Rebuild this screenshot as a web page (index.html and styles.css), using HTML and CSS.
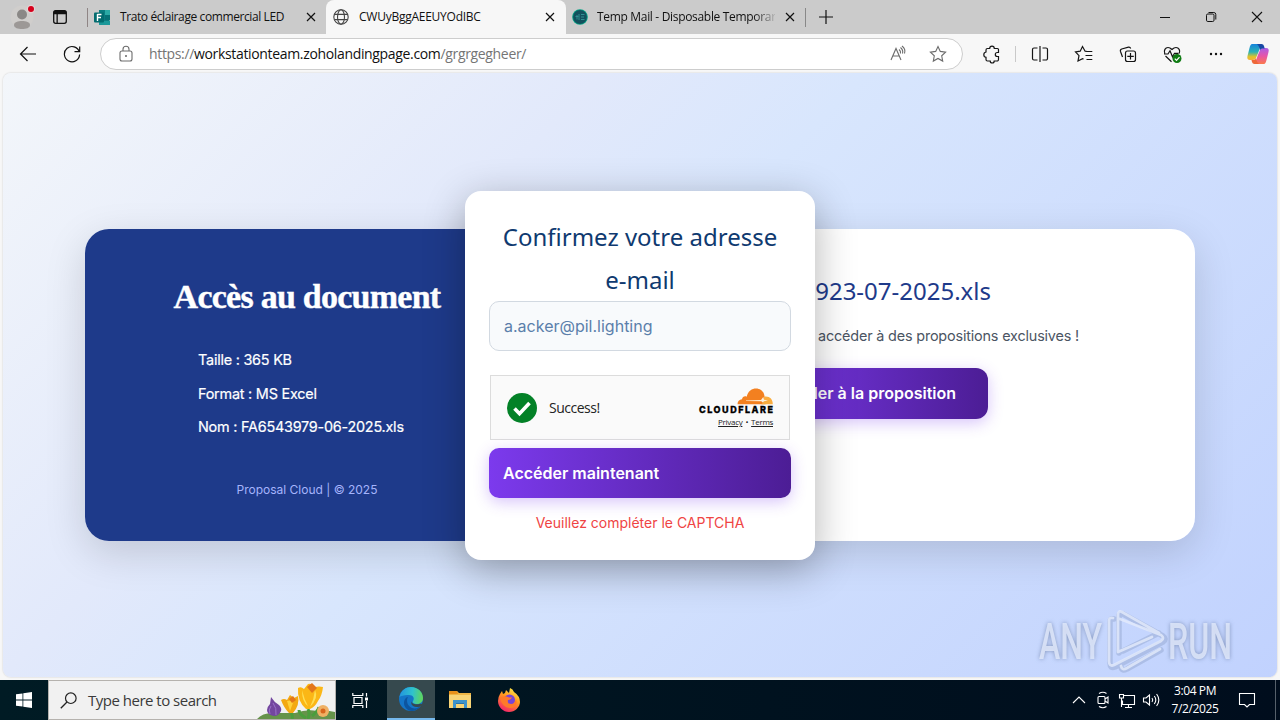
FILE: index.html
```html
<!DOCTYPE html>
<html lang="fr">
<head>
<meta charset="utf-8">
<title>CWUyBggAEEUYOdIBC</title>
<link rel="stylesheet" href="styles.css">
</head>
<body>
<div class="screen">
  <header class="tabstrip">
    <div class="profile">
      <svg width="26" height="30" viewBox="0 0 26 30"><circle cx="12" cy="15" r="11.500" fill="#d0cecc"/><circle cx="12" cy="12.500" r="5" fill="#8b8886"/><path d="M4 23c0-3 4-4 8-4s8 1 8 4-4 4-8 4-8-1-8-4z" fill="#9c9896"/><circle cx="21" cy="7" r="4.200" fill="#e3d3d3"/><circle cx="21" cy="7" r="3" fill="#d6001c"/></svg>
    </div>
    <div class="workspaces">
      <svg width="16" height="16" viewBox="0 0 16 16"><rect x="1.700" y="1.700" width="12.600" height="12.600" rx="2" fill="none" stroke="#111" stroke-width="1.300"/><path d="M1.500 3.500a2 2 0 0 1 2-2h9a2 2 0 0 1 2 2v1.800h-13zM4.500 5h1.300v9H4.500z" fill="#111"/></svg>
    </div>
    <div class="tab tab-first">
      <svg class="fav" width="17" height="17" viewBox="0 0 17 17"><path d="M5 1h10.500v15H5z" fill="#0b7c80"/><path d="M11 1h5v5h-5z" fill="#2aa9a5"/><path d="M11 6h5v5h-5z" fill="#067176"/><path d="M5 12h11v4H5z" fill="#1b9899"/><rect x="0" y="3.500" width="10" height="10" rx="1" fill="#036c70"/><path d="M3.500 5.500h4M3.500 5v7M3.500 8.500H7" stroke="#fff" stroke-width="1.400"/></svg>
      <span class="tab-title t1">Trato éclairage commercial LED</span>
      <svg class="x" width="10" height="10" viewBox="0 0 10 10"><path d="M1 1l8 8M9 1l-8 8"/></svg>
    </div>
    <div class="tab tab-active">
      <svg class="fav" width="16" height="16" viewBox="0 0 16 16" fill="none" stroke="#444" stroke-width="1.100"><circle cx="8" cy="8" r="7.200"/><ellipse cx="8" cy="8" rx="3.500" ry="7.200"/><path d="M1.500 5.400h13M1.500 10.600h13"/></svg>
      <span class="tab-title t2">CWUyBggAEEUYOdIBC</span>
      <svg class="x" width="10" height="10" viewBox="0 0 10 10"><path d="M1 1l8 8M9 1l-8 8"/></svg>
    </div>
    <div class="tab tab-last">
      <svg class="fav" width="16" height="16" viewBox="0 0 16 16"><circle cx="8" cy="8" r="7.800" fill="#00a284"/><circle cx="8" cy="8" r="6.900" fill="#12515d"/><path d="M3.500 7.500h3M5 6v4.500M7 5v6M9 5.500h3.500M9 8h3M9 10.500h3.500" stroke="#2e8f90" stroke-width="1" fill="none"/></svg>
      <span class="tab-title t3">Temp Mail - Disposable Temporar</span>
      <svg class="x" width="10" height="10" viewBox="0 0 10 10"><path d="M1 1l8 8M9 1l-8 8"/></svg>
    </div>
    <svg class="plus" width="14" height="14" viewBox="0 0 14 14"><path d="M7 0v14M0 7h14" stroke="#111" stroke-width="1.200"/></svg>
    <div class="winctl">
      <svg width="46" height="34" viewBox="0 0 46 34"><path d="M18 17.500h10" stroke="#111"/></svg>
      <svg width="46" height="34" viewBox="0 0 46 34" fill="none" stroke="#111"><rect x="18.500" y="14" width="7.500" height="7.500" rx="1.300"/><path d="M20.500 12.500h5.300a2 2 0 0 1 2 2v5"/></svg>
      <svg width="46" height="34" viewBox="0 0 46 34"><path d="M18 12l10 10M28 12l-10 10" stroke="#111" stroke-width="1.100"/></svg>
    </div>
  </header>

  <nav class="toolbar">
    <svg class="nav-ic" width="18" height="18" viewBox="0 0 18 18"><path d="M17 9H1.500M8.500 2L1.500 9l7 7"/></svg>
    <svg class="nav-ic reload" width="18" height="18" viewBox="0 0 18 18"><path d="M16.300 7A7.600 7.600 0 1 0 16.600 9.500M16.700 1.500v5.200h-5.200"/></svg>
    <div class="address">
      <svg class="lock" width="14" height="18" viewBox="0 0 14 18"><rect x="1" y="6" width="12" height="10" rx="2" /><path d="M4 6V4.200a3 3 0 0 1 6 0V6"/><circle cx="7" cy="11" r=".5"/></svg>
      <span class="url">https://<b>workstationteam.zoholandingpage.com</b>/grgrgegheer/</span>
      <svg class="read" width="18" height="18" viewBox="0 0 18 18"><path d="M2 15L7 3.500 12 15M4 11h6.200M10 4.500q2 1.500 1.500 4M11.500 2.500q3 2.500 2 6M13 1q4 3 2.500 7.500"/></svg>
      <svg class="star" width="18" height="18" viewBox="0 0 18 18"><path d="M9 1.500l2.300 4.900 5.300.7-3.900 3.700 1 5.300L9 13.500l-4.700 2.600 1-5.300L1.400 7.100l5.300-.7z"/></svg>
    </div>
    <div class="actions">
      <svg width="44" height="40" viewBox="0 0 44 40"><path d="M17.500 14.500h2.200a2.300 2.300 0 0 1 4.600 0h3.200a1 1 0 0 1 1 1v3h-1.200a2 2 0 0 0 0 4h1.200v3a1.500 1.500 0 0 1-1.500 1.500h-2.800a2 2 0 0 1-4 0h-2.700a1.500 1.500 0 0 1-1.500-1.500v-2.200a2.700 2.700 0 0 1 0-5.300v-2a1.500 1.500 0 0 1 1.500-1.500z"/></svg>
      <i class="sep"></i>
      <svg width="44" height="40" viewBox="0 0 44 40"><path d="M19.500 14h-3.500a1.500 1.500 0 0 0-1.500 1.500v9a1.500 1.500 0 0 0 1.500 1.500h3.500M24.500 14h3.500a1.500 1.500 0 0 1 1.500 1.500v9a1.500 1.500 0 0 1-1.500 1.500h-3.500M22 12v16"/></svg>
      <svg width="44" height="40" viewBox="0 0 44 40"><path d="M25 17.500l-1.900-.3L20.500 12.500l-2.300 4.700-4.700.8 3.500 3.700-1 5.300 4.500-2.400 1 .5M24 17.500h6.300M23.500 21.500h6.800M24.500 25.500h5.800"/></svg>
      <svg width="44" height="40" viewBox="0 0 44 40"><rect x="19.500" y="17" width="10" height="10.500" rx="2"/><path d="M24.500 19v6.500M21.300 22.300h6.500M16.500 23l-2-5.500a2 2 0 0 1 1.200-2.500l6.800-1.800a2 2 0 0 1 2.200 1.200"/></svg>
      <svg width="44" height="40" viewBox="0 0 44 40"><path d="M14.800 19.500c-1.300-3 .5-6 3.200-6 2 0 3 1 4 2 1-1 2-2 4-2 2.800 0 4.600 3 3.200 6M15.500 22l6 5.800M14 20h4l2-3.200 2.500 6 2-3.500h4"/><circle cx="27" cy="24.500" r="4.500" fill="#0f7b13" stroke="none"/><path d="M24.800 24.600l1.700 1.700 3-3.200" stroke="#fff"/></svg>
      <svg width="44" height="40" viewBox="0 0 44 40"><g fill="#111" stroke="none"><circle cx="17" cy="20" r="1.200"/><circle cx="22" cy="20" r="1.200"/><circle cx="27" cy="20" r="1.200"/></g></svg>
      <svg width="40" height="40" viewBox="0 0 40 40"><defs><linearGradient id="c1" x1="0" y1="0" x2="0" y2="1"><stop offset="0" stop-color="#1683dc"/><stop offset=".5" stop-color="#2bb3b5"/><stop offset=".8" stop-color="#e3c328"/><stop offset="1" stop-color="#f5b03c"/></linearGradient><linearGradient id="c2" x1="0" y1="0" x2="0" y2="1"><stop offset="0" stop-color="#a95fe8"/><stop offset=".5" stop-color="#e756a7"/><stop offset="1" stop-color="#fb794b"/></linearGradient></defs><g stroke="none"><path d="M14 10h9l-2.500 8-2.500 6q-1 2-3 2h-3q-3.500 0-2.500-4l2-8q1-4 2.500-4z" fill="url(#c1)"/><path d="M26 30h-9l2.500-8 2.500-6q1-2 3-2h3q3.500 0 2.500 4l-2 8q-1 4-2.500 4z" fill="url(#c2)"/><path d="M19 10h4.500q2 0 2.500 2l.7 2.500h-2.200q-2 0-2.500 2l-.7-3q-.5-2-2.300-3.500z" fill="#1749a5"/><path d="M21 30h-4.500q-2 0-2.500-2l-.5-2h2q2 0 2.500-2l.7 2.500q.5 2 2.300 3.500z" fill="#ee683a"/></g></svg>
    </div>
  </nav>

  <main class="page">
    <section class="card">
      <div class="panel-left">
        <h1>Accès au document</h1>
        <ul>
          <li>Taille : 365 KB</li>
          <li>Format : MS Excel</li>
          <li>Nom : FA6543979-06-2025.xls</li>
        </ul>
        <p class="foot">Proposal Cloud | © 2025</p>
      </div>
      <div class="panel-right">
        <h2>923-07-2025.xls</h2>
        <p>accéder à des propositions exclusives !</p>
        <div class="cta">Accéder à la proposition</div>
      </div>
    </section>

    <section class="modal">
      <h3>Confirmez votre adresse<br>e-mail</h3>
      <div class="input">a.acker@pil.lighting</div>
      <div class="captcha">
        <svg class="ok" width="30" height="30" viewBox="0 0 30 30"><circle cx="15" cy="15" r="15" fill="#038127"/><path d="M7.500 15.500l5 5.200L22.500 10" fill="none" stroke="#fff" stroke-width="3.600"/></svg>
        <span class="success">Success!</span>
        <div class="cf">
          <svg width="76" height="28" viewBox="0 0 76 28"><path d="M38.500 17.200c0-3 1.800-4.700 4.500-5 .3-2.600 3-3.700 4.700-2.500C49 4 53 1.500 57 1.500c4.500 0 7.800 3 8.500 7.500l1 8.200z" fill="#f38020"/><path d="M62 17.200c2.500-1 1.800-3 3.500-7.500 5-.7 8.300 2.500 8.300 7.500z" fill="#faad3f"/><path d="M47 13.400l15-.4 2.300-3 .7 2.700 4 .8-4 .8-1.200 1.300-1.500-1.300-15.300-.2z" fill="#fff3df"/><text x="0" y="26.300" textLength="74" lengthAdjust="spacing" class="cf-word">CLOUDFLARE</text></svg>
          <div class="links"><u>Privacy</u><em>•</em><u>Terms</u></div>
        </div>
      </div>
      <div class="submit">Accéder maintenant</div>
      <p class="error">Veuillez compléter le CAPTCHA</p>
    </section>

    <svg class="watermark" width="210" height="80" viewBox="0 0 210 80">
      <g class="wm-text"><text x="4" y="52" textLength="63" lengthAdjust="spacingAndGlyphs">ANY</text><text x="133" y="52" textLength="64" lengthAdjust="spacingAndGlyphs">RUN</text></g>
      <g fill="none" stroke-linecap="round" stroke-linejoin="round">
        <path d="M79 12q-4-1-4 3v41q0 6 5 4l48-25q4-3 0-6L88 7q-4-2-4 3v36M86 60q1 5 6 2l34-19M88 44l36-18" stroke="#8296bd" stroke-opacity=".35" stroke-width="5.500"/>
        <path d="M78 11q-4-1-4 3v40q0 6 5 4l47-24q4-3 0-6L85 12M124 26L87 5q-4-2-4 3v37l34-15M86 59q1 5 6 2l33-19" stroke="#e3ebfb" stroke-opacity=".8" stroke-width="2.800"/>
      </g>
    </svg>
  </main>

  <footer class="taskbar">
    <div class="start"><svg width="16" height="16" viewBox="0 0 16 16" fill="#fff"><path d="M0 2.300L6.500 1.400v6.200H0zM7.300 1.300L16 0v7.600H7.300zM0 8.400h6.500v6.200L0 13.700zM7.300 8.400H16V16l-8.700-1.300z"/></svg></div>
    <div class="search">
      <svg width="17" height="17" viewBox="0 0 17 17"><circle cx="10.800" cy="6.200" r="5.300" fill="none" stroke="#222" stroke-width="1.200"/><path d="M7 10L.8 16.200" stroke="#222" stroke-width="1.300"/></svg>
      <span>Type here to search</span>
      <svg class="flowers" width="78" height="38" viewBox="0 0 78 38"><path d="M0 38q6-7 18-6l20 0q12-4 22-2 10-1 18 1v7z" fill="#66934a"/><path d="M51 38Q53 32 51 28M35 38q1-3-1-6M49 37Q42 33 42 29M55 35q6-5 7-9" stroke="#4a9e3c" stroke-width="3" fill="none"/><path d="M14 16q3 5 8 8 3 3 2 6-2 5-7 5-7-1-7-6 0-3 3-6z" fill="#73469f"/><path d="M16 22q4 5 3 12M14 25q-3 4-1 8" stroke="#9a72c8" stroke-width="1" fill="none"/><path d="M24 19q3-2 6 0l3-5 4 3 4-2q2 9-5 17h-4q-5-5-8-13z" fill="#f3a912"/><path d="M30 20l3 10 4-11" fill="#ffd13a"/><path d="M41 7q3-2 6 1l4-5q4-1 7 3 4-1 8 0-1 9-5 14-3 6-8 8h-4q-9-8-8-21z" fill="#fbb716"/><path d="M45 9q2 9 6 16-6-4-6-16zM58 9q4 8-5 17 4-8 5-17z" fill="#ffdf55"/><path d="M50 6l5-4 5 5-5 5z" fill="#e3761a"/><path d="M32 18l4-3 3 4-4 3z" fill="#e3761a"/><circle cx="66" cy="30" r="6" fill="#efb064"/><circle cx="66" cy="30" r="2.500" fill="#d8661c"/></svg>
    </div>
    <div class="task tv"><svg width="17" height="17" viewBox="0 0 17 17" fill="none" stroke="#fff" stroke-width="1.200"><path d="M.8 1v2.500h10V1M.8 16v-2.500h10V16M2 5.500h8v6H2zM14.500 1v3.500M14.500 9v7"/><path d="M13 5.500h3v3h-3z" fill="#fff" stroke="none"/></svg></div>
    <div class="task edge"><svg width="24" height="24" viewBox="0 0 24 24"><defs><linearGradient id="e1" x1="0" y1=".3" x2="1" y2=".4"><stop offset="0" stop-color="#2294df"/><stop offset=".55" stop-color="#2fc2cd"/><stop offset="1" stop-color="#5fd65c"/></linearGradient></defs><circle cx="12" cy="12" r="12" fill="#1475c7"/><path d="M.5 10C2 3 7 0 12 0c7 0 12 5 12 11 0 4-3 6-6 6-3 0-5-1-4-3 2-3 0-6-4-6-4-.4-8 1-9.500 2z" fill="url(#e1)"/><path d="M9 10c-2 3-1 9 4 11 4 1.500 8-1 9-3-2 4-6 6-10 6-5-1-7-5-7-8 0-3 2-6 4-6z" fill="#0d559f"/><path d="M13 14c-1 3 4 4 8 2.700l3 .3v7l-1.500-5c-3 2-7 1-9-.5-1.500-1.500-1.500-3-.5-4.500z" fill="#36494e"/></svg></div>
    <div class="task"><svg width="22" height="20" viewBox="0 0 22 20"><path d="M0 1h8l2 2h12v15H0z" fill="#eeb545"/><path d="M0 5h22v13H0z" fill="#f8d476"/><path d="M0 1h8l1 3H0z" fill="#e8911a"/><path d="M4 10h14v8h-3v-4H7v4H4z" fill="#3d93cc"/><path d="M7 13h8v1H7z" fill="#2874aa"/></svg></div>
    <div class="task"><svg width="24" height="24" viewBox="0 0 24 24"><defs><linearGradient id="f1" x1=".8" y1="0" x2=".3" y2="1"><stop offset="0" stop-color="#fff04a"/><stop offset=".45" stop-color="#ff971f"/><stop offset="1" stop-color="#f5226c"/></linearGradient></defs><path d="M3 6l2-3 1 3 2-1 1-3q2 2 3 3l1-5q3 1 4 4 6 4 6 10c0 5-5 10-11 10S1 19 1 13q0-4 2-7z" fill="url(#f1)"/><circle cx="12.500" cy="12" r="5.500" fill="#7645d8"/><path d="M3 10q4-3 8-1 2 1 4 0-1 3-4 3-1 4 3 4 4 0 5-5 2 8-5 9-9 0-11-10z" fill="#ff7a29"/></svg></div>
    <div class="tray">
      <svg width="24" height="20" viewBox="0 0 24 20"><path d="M6 13l6-6 6 6"/></svg>
      <svg width="24" height="20" viewBox="0 0 24 20"><rect x="7" y="6.500" width="7" height="7" rx="1"/><path d="M14 9l3-2v6l-3-2M8 3.500q4-2.500 7.500 0M8 16.500q4 2.500 7.500 0"/></svg>
      <svg width="24" height="20" viewBox="0 0 24 20"><path d="M8.500 5.500h11v9h-12v-4M13.500 14.500v3M10 17.500h7M4.500 4.500h4v3.500h-4zM6.500 8v9"/></svg>
      <svg width="24" height="20" viewBox="0 0 24 20"><path d="M4.500 8h2.500l3.500-3v10l-3.500-3H4.500zM13 8q1.500 2 0 4M15.300 6q3 4 0 8M17.600 4q4.500 6 0 12"/></svg>
      <div class="clock"><span>3:04 PM</span><span>7/2/2025</span></div>
      <svg class="note" width="18" height="18" viewBox="0 0 18 18"><path d="M1.500 2.500h15v11h-5L9 16l-2.500-2.500h-5z"/></svg>
      <i class="peek"></i>
    </div>
  </footer>
</div>
</body>
</html>
```
FILE: styles.css
```css
* { box-sizing: border-box; }
body { margin: 0; font-family: "Open Sans", "Noto Sans", sans-serif; }
h1, h2, h3, p, ul { margin: 0; padding: 0; font-weight: 400; }
svg { display: block; flex: none; }
.screen { width: 1280px; height: 720px; display: flex; flex-direction: column; overflow: hidden; background: #f7f7f7; white-space: nowrap; }

/* Tab strip */
.tabstrip { height: 34px; flex: none; background: #cbcbcb; display: flex; align-items: center; }
.profile { width: 42px; padding-left: 10px; }
.workspaces { width: 46px; padding-left: 10px; }
.tab { height: 34px; display: flex; align-items: center; font-size: 12px; color: #111; }
.tab-first { width: 238px; padding-left: 6px; position: relative; }
.tab-first::before { content: ""; position: absolute; left: -1px; top: 8px; width: 1px; height: 19px; background: #8f8585; }
.tab-active { width: 240px; background: #f7f7f7; border-radius: 8px 8px 0 0; padding-left: 7px; }
.tab-last { width: 240px; padding-left: 6px; position: relative; }
.tab-last::after { content: ""; position: absolute; left: 239px; top: 8px; width: 1px; height: 19px; background: #888; }
.fav { margin-right: 9px; }
.tab-active .fav { margin-right: 10px; }
.tab-title { flex: none; line-height: 20px; }
.t1 { width: 186px; letter-spacing: -.4px; }
.t2 { width: 186px; letter-spacing: -.25px; }
.t3 { width: 178px; margin-right: 10px; letter-spacing: -.32px; -webkit-mask-image: linear-gradient(90deg, #000 88%, transparent 102%); mask-image: linear-gradient(90deg, #000 88%, transparent 102%); }
.x { stroke: #111; stroke-width: 1.2; }
.plus { margin-left: 13px; }
.winctl { display: flex; margin-left: auto; }

/* Toolbar */
.toolbar { height: 39px; flex: none; display: flex; align-items: center; padding-left: 19px; }
.nav-ic { fill: none; stroke: #111; stroke-width: 1.2; }
.reload { margin-left: 26px; }
.address { width: 863px; height: 32px; margin-left: 19px; border: 1px solid #cdcdcd; border-radius: 16px; background: #fff; display: flex; align-items: center; padding: 0 15px 0 18px; }
.address svg { fill: none; stroke: #6c6c6c; stroke-width: 1.1; }
.url { margin-left: 16px; flex: 1; font-size: 14px; letter-spacing: -.34px; color: #757575; }
.url b { font-weight: 400; color: #111; }
.read { margin-right: 22px; }
.actions { display: flex; align-items: center; margin-left: 7px; }
.actions svg { fill: none; stroke: #151515; stroke-width: 1.2; }
.sep { width: 1px; height: 16px; background: #c9c9c9; margin: 0 2px 0 1px; }

/* Web page */
.page { height: 604px; margin: 0 3px 3px; flex: none; border-radius: 8px; position: relative; overflow: hidden; display: flex; align-items: center; justify-content: center; padding-top: 20px; background: linear-gradient(135deg, #f3f6fa 0%, #e2e9fb 32%, #d8e6fd 46%, #c1d2fe 100%); font-family: Inter, sans-serif; box-shadow: 0 0 2px rgba(0, 0, 0, .2); }
.card { width: 1110px; height: 312px; display: flex; border-radius: 24px; overflow: hidden; box-shadow: 0 12px 40px rgba(0, 0, 0, .15); }
.panel-left { width: 444px; background: #1e3a8a; color: #fff; padding-top: 48px; }
.panel-left h1 { font: 700 34px/40px "Liberation Serif", serif; letter-spacing: -.75px; -webkit-text-stroke: .4px #fff; text-align: center; }
.panel-left ul { list-style: none; padding: 26px 0 0 113px; }
.panel-left li { height: 33.5px; line-height: 33.5px; font-size: 14.4px; letter-spacing: -.22px; -webkit-text-stroke: .2px #fff; }
.foot { font-size: 12px; line-height: 20px; margin-top: 36px; text-align: center; color: #a5b4fc; }
.panel-right { flex: 1; background: #fff; display: flex; flex-direction: column; align-items: flex-end; padding-top: 40px; }
.panel-right h2 { font: 400 24px/44px "Noto Sans", sans-serif; color: #1e3a8a; margin-right: 204px; }
.panel-right p { font-size: 14.4px; letter-spacing: -.17px; line-height: 24px; margin: 11px 116px 0 0; color: #4b5563; }
.cta { width: 252px; height: 51px; margin: 20px 207px 0 0; padding-right: 32px; border-radius: 12px; text-align: right; font-weight: 600; font-size: 16px; line-height: 51px; color: #fff; background: linear-gradient(90deg, #7c3aed, #4c1d95); box-shadow: 0 4px 15px rgba(124, 58, 237, .3); }

/* Dialog lies over the card */
.modal { position: absolute; left: 462px; top: 118px; width: 350px; height: 369px; background: #fff; border-radius: 16px; padding: 24px; box-shadow: 0 10px 40px rgba(0, 0, 0, .3); }
.modal h3 { font: 400 24px/43px "Noto Sans", sans-serif; color: #0f3a70; text-align: center; }
.input { height: 50px; border: 1px solid #d2d9e1; border-radius: 10px; background: #f8fafc; padding-left: 14px; font-size: 16px; line-height: 49px; color: #5b7fab; }
.captcha { width: 300px; height: 65px; margin: 24px 0 8px 1px; border: 1px solid #dcdcdc; background: #fafafa; display: flex; align-items: center; padding: 0 16px; font-family: "Open Sans", sans-serif; }
.success { margin-left: 12px; font-size: 14px; letter-spacing: -.5px; color: #232323; }
.cf { margin-left: auto; width: 74px; }
.cf svg { overflow: visible; }
.cf-word { font: 800 9px Inter, sans-serif; stroke: #000; stroke-width: .3px; }
.links { display: flex; justify-content: flex-end; gap: 3px; font-size: 8px; line-height: 12px; letter-spacing: -.3px; margin-top: 1px; color: #232323; }
.links em { font-style: normal; }
.submit { height: 50px; border-radius: 10px; padding-left: 14px; font-weight: 600; font-size: 16px; line-height: 51px; color: #fff; background: linear-gradient(90deg, #7c3aed, #4c1d95); box-shadow: 0 4px 15px rgba(124, 58, 237, .3); }
.error { font-size: 14px; line-height: 24px; margin-top: 13px; text-align: center; color: #ef4444; }

.watermark { position: absolute; left: 1032px; top: 534px; }
.wm-text { font: 500 50px Roboto, sans-serif; fill: #dfe8fa; fill-opacity: .85; filter: drop-shadow(0 0 2px rgba(90, 110, 150, .7)); }

/* Taskbar */
.taskbar { height: 40px; flex: none; display: flex; background: linear-gradient(90deg, #001b24, #00121f 60%, #000d1d); color: #fff; }
.start { width: 48px; display: flex; align-items: center; justify-content: center; }
.search { width: 288px; background: #f1f1f1; border: 1px solid #b5b2ae; display: flex; align-items: center; padding-left: 11px; position: relative; }
.search span { margin-left: 11px; color: #3a3a3a; font-size: 15px; letter-spacing: -.5px; }
.flowers { position: absolute; right: 0; bottom: 0; }
.task { width: 49px; display: flex; align-items: center; justify-content: center; }
.tv { width: 51px; padding-right: 2px; }
.edge { width: 48px; background: #36494e; border-bottom: 2px solid #76b9ed; }
.tray { margin-left: auto; display: flex; align-items: center; }
.tray svg { fill: none; stroke: #fff; stroke-width: 1.1; }
.clock { width: 64px; display: flex; flex-direction: column; align-items: center; font-size: 12px; line-height: 18px; letter-spacing: -.4px; }
.note { margin-left: 11px; }
.peek { width: 1px; height: 40px; background: #56606b; margin: 0 4px 0 19px; }
```
